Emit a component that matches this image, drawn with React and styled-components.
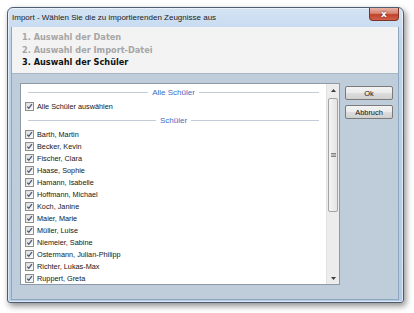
import styled, { createGlobalStyle } from 'styled-components';

const Global = createGlobalStyle`
    html, body { margin: 0; padding: 0; background: #ffffff; }
    body { font-family: "Liberation Sans", Arial, sans-serif; }
`

const Page = styled.div`
    width: 414px; height: 313px; padding: 7px 0 0 7px; box-sizing: border-box;
`
const Window = styled.div`
    width: 397px; height: 296px; box-sizing: border-box;
    display: flex; flex-direction: column;
    border: 1px solid #4d5d70; border-radius: 6px 6px 3px 3px;
    background: linear-gradient(180deg, #d3e3f4 0%, #bfd5ed 12%, #b3cbe5 100%);
    box-shadow: 2px 3px 6px rgba(0,0,0,0.45), inset 0 0 0 1px rgba(255,255,255,0.55);
`
const TitleBar = styled.div`
    height: 19px; display: flex; align-items: center; padding-left: 4px;
    font-size: 8px; color: #1b1b1b;
`
const CloseBtn = styled.div`
    margin-left: auto; margin-right: 4px; align-self: flex-start;
    width: 30px; height: 13px; box-sizing: border-box;
    border: 1px solid #7a3429; border-top: none; border-radius: 0 0 4px 4px;
    background: linear-gradient(180deg, #e9b3a8 0%, #d7826f 45%, #c0432b 55%, #d1614a 100%);
    display: flex; align-items: center; justify-content: center;
    color: #fff; font-family: "DejaVu Sans", sans-serif; font-weight: bold; font-size: 9px;
    text-shadow: 0 0 2px #6a1a10;
`
const Client = styled.div`
    flex: 1; margin: 0 4px 2px 3px; display: flex; flex-direction: column;
    border: 1px solid #8fa6c0; border-top: none;
`
const StepPanel = styled.div`
    height: 47px; box-sizing: border-box; padding: 4px 11px 0 10px;
    background: #f3f3f3; border-bottom: 1px solid #a9b6c4;
    font-family: "DejaVu Sans", Verdana, sans-serif; font-weight: bold; font-size: 8.2px;
`
const Step = styled.div`
    line-height: 12.5px; color: ${p => p.active ? '#111' : '#a6a6a6'};
`
const Body = styled.div`
    flex: 1; display: flex; align-items: flex-start; gap: 5px;
    padding: 9px 5px 12px 8px; background: #bfcddb;
`
const ListBox = styled.div`
    width: 320px; height: 202px; box-sizing: border-box; flex-shrink: 0;
    display: flex; background: #fff; border: 1px solid #8c99a8;
`
const Items = styled.div`
    flex: 1; padding-top: 1px; overflow: hidden; font-size: 7.3px; color: #161616;
`
const GroupHead = styled.div`
    height: 14px; display: flex; align-items: center; gap: 4px; padding: 0 7px;
    color: #3f6ec3; font-size: 8px;
    &::before, &::after { content: ""; flex: 1; height: 1px; background: #c2ccd8; }
`
const Row = styled.div`
    height: ${p => p.tall ? 14 : 12}px; display: flex; align-items: center; gap: 3px; padding-left: 4px;
    margin-top: ${p => p.gap ? 1 : 0}px;
`
const Box = styled.span`
    width: 9px; height: 9px; box-sizing: border-box; flex-shrink: 0;
    border: 1px solid #8e8f8f; background: linear-gradient(135deg, #dcdcdc, #fbfbfb);
    display: flex; align-items: center; justify-content: center;
`
const Scrollbar = styled.div`
    width: 12px; display: flex; flex-direction: column; background: #ececec;
    border-left: 1px solid #e2e2e2;
`
const Arrow = styled.div`
    height: 12px; display: flex; align-items: center; justify-content: center;
`
const Track = styled.div`
    flex: 1; padding-top: 2px;
`
const Thumb = styled.div`
    height: 114px; margin: 0 1px; box-sizing: border-box;
    border: 1px solid #a3a3a3; border-radius: 2px;
    background: linear-gradient(90deg, #f4f4f4, #e4e4e4);
    display: flex; align-items: center; justify-content: center;
`
const Side = styled.div`
    display: flex; flex-direction: column; gap: 5px; padding-top: 3px;
`
const Button = styled.div`
    width: 48px; height: 14px; box-sizing: border-box;
    border: 1px solid #7a7a7a; border-radius: 2px;
    background: linear-gradient(180deg, #f3f3f3 0%, #ececec 48%, #dddddd 52%, #d0d0d0 100%);
    display: flex; align-items: center; justify-content: center;
    font-size: 7.4px; color: #111;
`

const students = [
    'Barth, Martin', 'Becker, Kevin', 'Fischer, Clara', 'Haase, Sophie', 'Hamann, Isabelle',
    'Hoffmann, Michael', 'Koch, Janine', 'Maier, Marie', 'Müller, Luise', 'Niemeier, Sabine',
    'Ostermann, Julian-Philipp', 'Richter, Lukas-Max', 'Ruppert, Greta',
]

function Check(){
    return(
        <Box>
            <svg width="7" height="7" viewBox="0 0 7 7">
                <path d="M1.2 3.6 L2.8 5.3 L5.9 1.2" fill="none" stroke="#4a5a78" strokeWidth="1.3" />
            </svg>
        </Box>
    )
}

export default function App(){
    return(
        <Page>
            <Global />
            <Window>
                <TitleBar>
                    Import - Wählen Sie die zu importierenden Zeugnisse aus
                    <CloseBtn>x</CloseBtn>
                </TitleBar>
                <Client>
                    <StepPanel>
                        <Step>1. Auswahl der Daten</Step>
                        <Step>2. Auswahl der Import-Datei</Step>
                        <Step active>3. Auswahl der Schüler</Step>
                    </StepPanel>
                    <Body>
                        <ListBox>
                            <Items>
                                <GroupHead>Alle Schüler</GroupHead>
                                <Row tall><Check />Alle Schüler auswählen</Row>
                                <GroupHead>Schüler</GroupHead>
                                {students.map((s, i) => <Row key={s} gap={i === 0}><Check />{s}</Row>)}
                            </Items>
                            <Scrollbar>
                                <Arrow>
                                    <svg width="5" height="3" viewBox="0 0 5 3"><path d="M0 3 L2.5 0 L5 3Z" fill="#3c3c3c" /></svg>
                                </Arrow>
                                <Track>
                                    <Thumb>
                                        <svg width="5" height="4" viewBox="0 0 5 4">
                                            <path d="M0 0.5 H5 M0 2 H5 M0 3.5 H5" stroke="#6d6d6d" strokeWidth="0.8" />
                                        </svg>
                                    </Thumb>
                                </Track>
                                <Arrow>
                                    <svg width="5" height="3" viewBox="0 0 5 3"><path d="M0 0 L2.5 3 L5 0Z" fill="#3c3c3c" /></svg>
                                </Arrow>
                            </Scrollbar>
                        </ListBox>
                        <Side>
                            <Button>Ok</Button>
                            <Button>Abbruch</Button>
                        </Side>
                    </Body>
                </Client>
            </Window>
        </Page>
    )
}
